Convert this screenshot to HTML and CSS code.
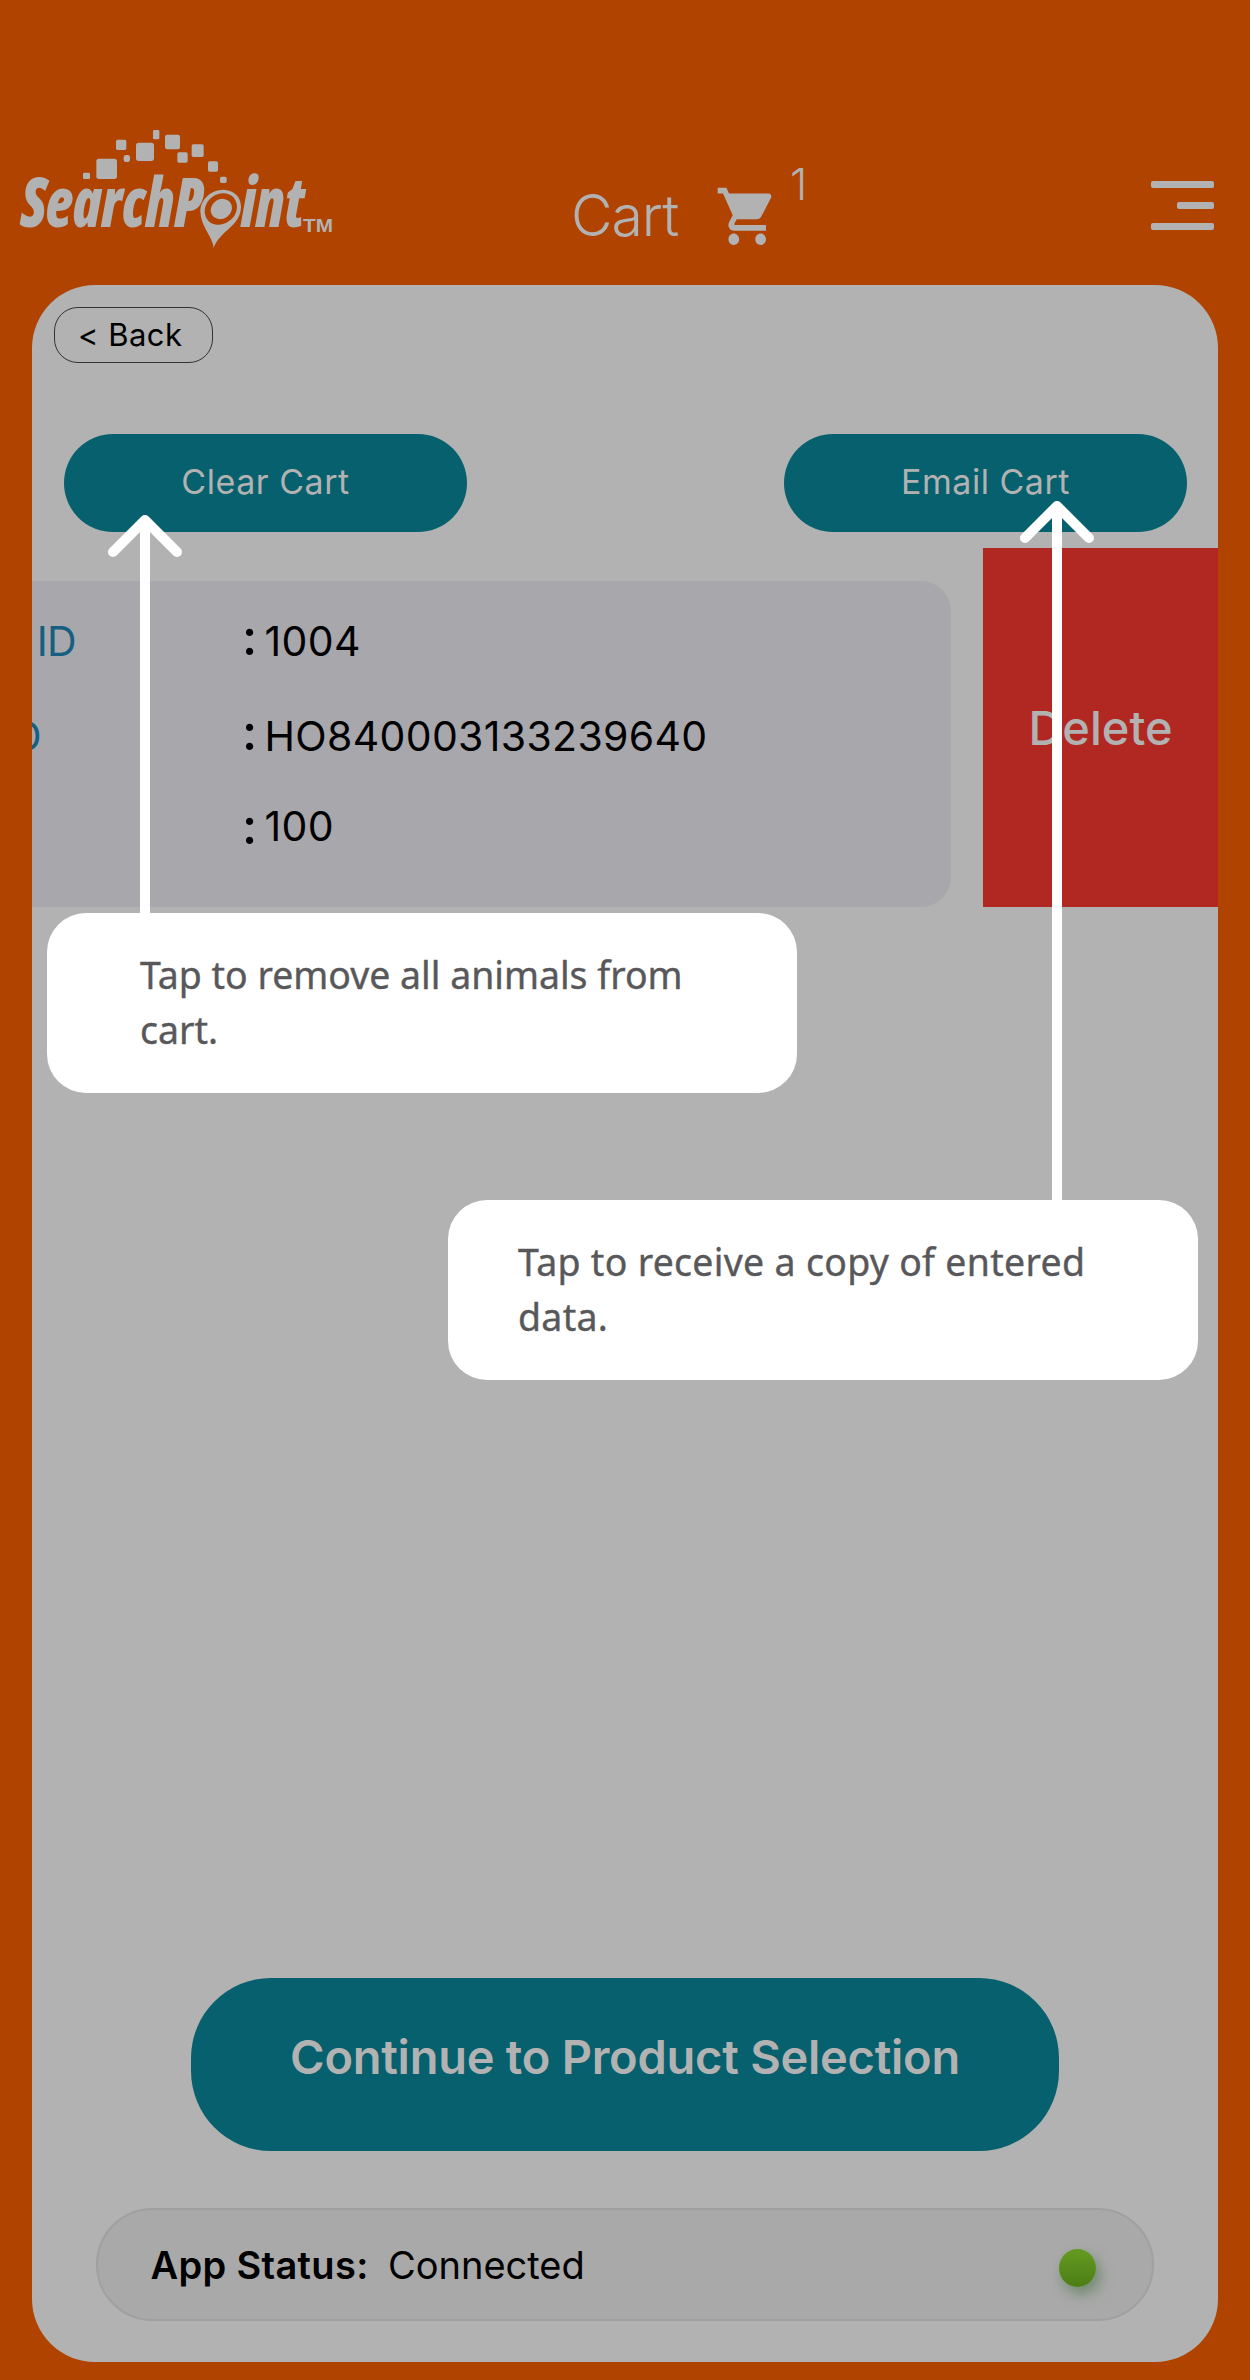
FILE: index.html
```html
<!DOCTYPE html>
<html lang="en">
<head>
<meta charset="utf-8">
<title>SearchPoint – Cart</title>
<link rel="stylesheet" href="styles.css">
</head>
<body>
<div class="screen">
  <header class="header">
    <svg class="logo" viewBox="0 0 1080 450" role="img" aria-label="SearchPoint">
      <g class="logo-ink">
        <rect x="249" y="188" width="21" height="19" rx="4"/>
        <rect x="289" y="146" width="62" height="61" rx="8"/>
        <rect x="348" y="89" width="31" height="31" rx="5"/>
        <rect x="371" y="135" width="19" height="21" rx="7"/>
        <rect x="408" y="98" width="54" height="55" rx="8"/>
        <rect x="459" y="60" width="19" height="28" rx="4"/>
        <rect x="495" y="74" width="45" height="44" rx="7"/>
        <rect x="532" y="127" width="31" height="31" rx="5"/>
        <rect x="575" y="103" width="36" height="38" rx="5"/>
        <rect x="624" y="154" width="30" height="31" rx="5"/>
        <rect x="660" y="200" width="20" height="19" rx="5"/>
        <text class="logo-word" x="62" y="351" textLength="545" lengthAdjust="spacingAndGlyphs">SearchP</text>
        <text class="logo-word" x="723" y="351" textLength="190" lengthAdjust="spacingAndGlyphs">int</text>
        <text class="logo-tm" x="909" y="366" textLength="90" lengthAdjust="spacingAndGlyphs">TM</text>
        <path fill-rule="evenodd" d="M641 414C640 384 601 348 601 303C602 268 632 240 670 239C702 240 723 260 723 290C723 326 697 347 678 364C658 383 647 396 641 414ZM658 344C689 341 712 317 711 288C709 264 692 249 668 250C637 252 613 277 614 307C616 330 633 346 658 344Z"/>
        <ellipse cx="664" cy="297" rx="33" ry="29" transform="rotate(-35 664 297)"/>
      </g>
    </svg>
    <h1 class="title">Cart</h1>
    <svg class="cart-icon" viewBox="0 0 24 24" preserveAspectRatio="none" aria-hidden="true">
      <path d="M7 18c-1.1 0-1.99.9-1.99 2S5.9 22 7 22s2-.9 2-2-.9-2-2-2zM1 2v2h2l3.6 7.59-1.35 2.45c-.16.28-.25.61-.25.96 0 1.1.9 2 2 2h12v-2H7.42c-.14 0-.25-.11-.25-.25l.03-.12.9-1.63h7.45c.75 0 1.41-.41 1.75-1.03l3.58-6.49c.08-.14.12-.31.12-.48 0-.55-.45-1-1-1H5.21l-.94-2H1zm16 16c-1.1 0-1.99.9-1.99 2s.89 2 1.99 2 2-.9 2-2-.9-2-2-2z"/>
    </svg>
    <span class="cart-count">1</span>
    <div class="menu" role="button" aria-label="Menu">
      <span class="menu-bar"></span>
      <span class="menu-bar menu-bar-short"></span>
      <span class="menu-bar"></span>
    </div>
  </header>

  <main class="panel">
    <div class="back">&lt; Back</div>
    <div class="actions">
      <div class="action">Clear Cart</div>
      <div class="action">Email Cart</div>
    </div>
    <div class="swipe-row">
      <div class="item">
        <div class="field"><span class="label">ID</span><span class="colon">:</span><span class="value">1004</span></div>
        <div class="field"><span class="label label-cut">ID</span><span class="colon">:</span><span class="value">HO840003133239640</span></div>
        <div class="field"><span class="label"></span><span class="colon">:</span><span class="value value-raised">100</span></div>
      </div>
      <div class="delete">Delete</div>
    </div>
    <div class="continue">Continue to Product Selection</div>
    <div class="status">
      <span class="status-label">App Status:</span>
      <span class="status-value">Connected</span>
      <span class="status-dot"></span>
    </div>
  </main>

  <svg class="arrows" viewBox="0 0 1250 2380" aria-hidden="true">
    <path d="M145 920V520"/>
    <path class="arrow-head" d="M113 552L145 520L177 552"/>
    <path d="M1057 1210V506"/>
    <path class="arrow-head" d="M1025 538L1057 506L1089 538"/>
  </svg>
  <div class="callout callout-clear"><p class="callout-text">Tap to remove all animals from<br>cart.</p></div>
  <div class="callout callout-email"><p class="callout-text">Tap to receive a copy of entered<br>data.</p></div>
</div>
</body>
</html>
```
FILE: styles.css
```css
* { box-sizing: border-box; }

body {
  margin: 0;
  background: #b04300;
  font-family: Inter, "Liberation Sans", sans-serif;
  color: #000;
}

.screen {
  position: relative;
  width: 1250px;
  height: 2380px;
  overflow: hidden;
  background: #b04300;
}

/* Header */
.header {
  display: flex;
  align-items: flex-start;
  height: 284.5px;
  color: #b2b2b2;
}
.logo { width: 360px; height: 150px; margin-top: 110px; }
.logo-ink { fill: #b2b2b2; }
.logo-word {
  font: italic 800 207px "Open Sans", sans-serif;
  font-stretch: 75%;
}
.logo-tm { font: 700 53px "Liberation Sans", sans-serif; }
.title {
  width: 143.6px;
  margin: 186px 0 0 211px;
  font-size: 57px;
  font-weight: 350;
  line-height: 60px;
  letter-spacing: -1px;
}
.cart-icon { width: 64.4px; height: 68.7px; margin-top: 182px; fill: #b2b2b2; }
.cart-count {
  margin: 162px 0 0 11px;
  font-size: 44px;
  font-weight: 350;
  line-height: 44px;
}
.menu {
  display: flex;
  flex-direction: column;
  align-items: flex-end;
  gap: 14px;
  margin: 181px 36px 0 auto;
}
.menu-bar { width: 63px; height: 7px; border-radius: 2px; background: #b2b2b2; }
.menu-bar-short { width: 37px; }

/* Panel */
.panel {
  display: flex;
  flex-direction: column;
  height: 2077.5px;
  margin: 0 32px;
  padding: 22.5px 0 41px;
  overflow: hidden;
  border-radius: 63px;
  background: #b2b2b2;
}
.back {
  width: 159px;
  height: 56px;
  margin-left: 22px;
  padding-left: 23px;
  border: 1.5px solid #333;
  border-radius: 24px;
  font-size: 31px;
  line-height: 54px;
  letter-spacing: .47px;
}
.actions {
  display: flex;
  justify-content: space-between;
  margin: 71px 31px 0 32px;
}
.action {
  width: 403px;
  height: 98px;
  border-radius: 49px;
  background: #07606e;
  color: #b2b2b2;
  font-size: 34px;
  line-height: 95px;
  letter-spacing: .53px;
  text-align: center;
}

/* Swiped list row */
.swipe-row {
  display: flex;
  justify-content: space-between;
  height: 359px;
  margin-top: 16px;
}
.item {
  width: 919px;
  margin-top: 33px;
  padding-top: 13px;
  border-radius: 0 30px 30px 0;
  background: #a8a7ac;
}
.field {
  display: flex;
  height: 94.5px;
  font-size: 41px;
  line-height: 94px;
}
.label {
  display: flex;
  justify-content: flex-end;
  width: 44px;
  margin-right: 166px;
  color: #165f80;
  letter-spacing: -.7px;
}
.label-cut { width: 9px; margin-right: 201px; }
.colon { width: 22.5px; font-size: 50px; font-weight: 500; line-height: 87px; }
.value { letter-spacing: .33px; }
.value-raised { line-height: 86.5px; }
.delete {
  width: 235px;
  background: #b12822;
  color: #b2b2b2;
  font-size: 47px;
  font-weight: 500;
  line-height: 359px;
  text-align: center;
}

/* Footer controls */
.continue {
  width: 868px;
  height: 173px;
  margin: auto auto 57px 159px;
  border-radius: 80px;
  background: #07606e;
  color: #b2b2b2;
  font-size: 47px;
  font-weight: 600;
  line-height: 158px;
  letter-spacing: -.25px;
  text-align: center;
}
.status {
  display: flex;
  align-items: center;
  height: 113px;
  margin: 0 64px;
  padding: 0 56px 0 52.5px;
  border: 2px solid #a0a0a0;
  border-radius: 56.5px;
  background: #a9a9a9;
  font-size: 38px;
}
.status-label { width: 237.5px; font-weight: 600; letter-spacing: .33px; }
.status-dot {
  width: 37px;
  height: 38px;
  margin: 6px 0 0 auto;
  border-radius: 50%;
  background: linear-gradient(#659b22, #4c7d14);
  box-shadow: 4px 7px 14px rgba(80, 120, 80, .65);
}

/* Coach marks */
.arrows {
  position: absolute;
  inset: 0;
  width: 1250px;
  height: 2380px;
  fill: none;
  stroke: #fff;
  stroke-width: 10;
}
.arrow-head { stroke-linecap: round; stroke-linejoin: round; }
.callout {
  position: absolute;
  width: 750px;
  height: 180px;
  padding-top: 33px;
  border-radius: 39px;
  background: #fff;
  color: #58585a;
  font-family: "Noto Sans", "Open Sans", sans-serif;
  font-size: 39px;
  line-height: 55px;
  white-space: nowrap;
  -webkit-text-stroke: .4px #58585a;
}
.callout-text { margin: 0; transform: scaleX(.96); transform-origin: left; }
.callout-clear { left: 47px; top: 913px; padding-left: 92.5px; }
.callout-email { left: 448px; top: 1200px; padding-left: 70px; letter-spacing: .32px; }
```
